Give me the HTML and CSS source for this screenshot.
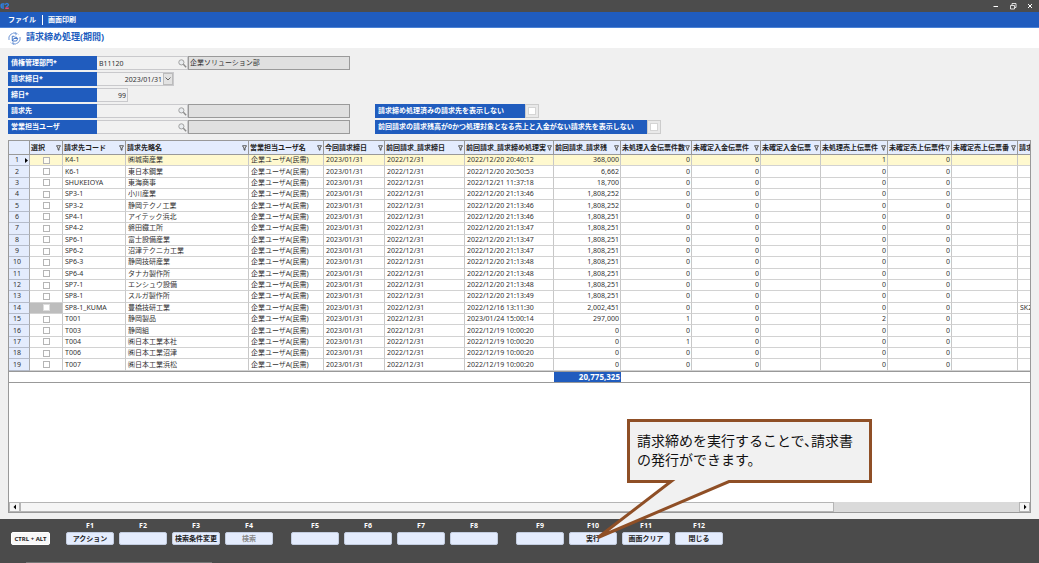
FILE: index.html
```html
<!DOCTYPE html>
<html lang="ja">
<head>
<meta charset="utf-8">
<title>請求締め処理(期間)</title>
<link rel="stylesheet" href="styles.css">
</head>
<body>
<svg class="symbols" aria-hidden="true">
  <symbol id="funnel" viewBox="0 0 10 12"><path d="M1 1.5H9L6 6V10.5L4 9.5V6Z" fill="#fff" stroke="#222" stroke-width="1.5"/></symbol>
  <symbol id="lens" viewBox="0 0 16 16"><circle cx="6" cy="6" r="4.6" fill="#e9ecef" stroke="#999" stroke-width="1.6"/><path d="M9.5 9.5L14.5 14.5" stroke="#8c8c8c" stroke-width="2.6"/></symbol>
</svg>

<header class="titlebar">
  <svg class="logo" viewBox="0 0 20 16" aria-label="E2"><path d="M9 4H5Q2 4 2 8T5 12H8M2 8H8" fill="none" stroke="#2f7fe0" stroke-width="2.600"/><path d="M10 5.500Q13 1.500 16 4T12 10.500" fill="none" stroke="#2f7fe0" stroke-width="2.600"/><path d="M10.500 12.500H17.500" stroke="#e8457f" stroke-width="3"/></svg>
  <div class="window-buttons">
    <button aria-label="最小化"><svg viewBox="0 0 8 8"><path d="M1.500 4.500H6" stroke="#fff"/></svg></button>
    <button aria-label="元に戻す"><svg viewBox="0 0 8 8"><path d="M1.500 3.500H5.500V7H1.500ZM3 3V1.500H7V5.500H6" fill="none" stroke="#fff" stroke-width=".8"/></svg></button>
    <button aria-label="閉じる"><svg viewBox="0 0 8 8"><path d="M2 2L6 6M6 2L2 6" stroke="#fff"/></svg></button>
  </div>
</header>

<nav class="menu"><a href="#">ファイル</a><a href="#">画面印刷</a></nav>

<div class="heading">
  <svg viewBox="0 0 26 26" aria-hidden="true"><g fill="none" stroke="#205cbe" stroke-width="1.300"><path d="M2 16A11 11 0 0 1 17 3M24 10A11 11 0 0 1 9 23"/><path d="M13.500 .8L17.500 3L15 6.500M12.500 25.200L8.500 23L11 19.500"/><path d="M7 4A12 12 0 0 1 22 6M19 22A12 12 0 0 1 4 20" stroke="#b4caec"/></g><path d="M8.500 17.500V8.500H12L13.500 10.500H17.500V12.500" fill="none" stroke="#205cbe" stroke-width="1.600"/><path d="M8.500 18L11.500 13H19.500L17 18Z" fill="#fff" stroke="#205cbe" stroke-width="1.600"/></svg>
  <h1>請求締め処理(期間)</h1>
</div>

<main>
  <form class="filters">
    <div class="fields">
      <div class="row"><label for="dept">債権管理部門*</label><div class="field lookup"><input id="dept" value="B11120"><button type="button" aria-label="債権管理部門の検索"><svg><use href="#lens"/></svg></button></div><input class="readonly" aria-label="債権管理部門名" value="企業ソリューション部" readonly></div>
      <div class="row"><label for="closing">請求締日*</label><div class="field date"><input id="closing" value="2023/01/31"><button type="button" aria-label="日付を選択"><svg viewBox="0 0 8 8"><path d="M1.500 2.500L4 5L6.500 2.500" fill="none" stroke="#666"/></svg></button></div></div>
      <div class="row"><label for="day">締日*</label><div class="field day"><input id="day" value="99"></div></div>
      <div class="row"><label for="client">請求先</label><div class="field lookup"><input id="client"><button type="button" aria-label="請求先の検索"><svg><use href="#lens"/></svg></button></div><input class="readonly" aria-label="請求先名" readonly></div>
      <div class="row"><label for="user">営業担当ユーザ</label><div class="field lookup"><input id="user"><button type="button" aria-label="営業担当ユーザの検索"><svg><use href="#lens"/></svg></button></div><input class="readonly" aria-label="営業担当ユーザ名" readonly></div>
    </div>
    <div class="options">
      <div class="row"><label class="closed" for="hide-closed">請求締め処理済みの請求先を表示しない</label><span class="tick"><input id="hide-closed" type="checkbox"></span></div>
      <div class="row"><label class="empty" for="hide-empty">前回請求の請求残高が0かつ処理対象となる売上と入金がない請求先を表示しない</label><span class="tick"><input id="hide-empty" type="checkbox"></span></div>
    </div>
  </form>

  <section class="grid">
    <div class="viewport">
      <table>
        <colgroup><col class="w-num"><col class="w-pick"><col class="w-code"><col class="w-name"><col class="w-user"><col class="w-now"><col class="w-prev"><col class="w-stamp"><col class="w-rest"><col class="w-in1"><col class="w-in2"><col class="w-in3"><col class="w-out1"><col class="w-out2"><col class="w-out3"><col class="w-last"></colgroup>
        <thead><tr id="head"></tr></thead>
        <tbody id="rows"></tbody>
        <tfoot><tr><td colspan="8"></td><td class="total">20,775,325</td><td colspan="7"></td></tr></tfoot>
      </table>
    </div>
    <div class="scrollbar">
      <button aria-label="左へ"><svg viewBox="0 0 8 8"><path d="M5 1.500V6.500L2.500 4Z"/></svg></button>
      <div class="track"><div class="thumb"></div></div>
      <button aria-label="右へ"><svg viewBox="0 0 8 8"><path d="M3 1.500V6.500L5.500 4Z"/></svg></button>
    </div>
  </section>
</main>

<footer>
  <div class="keys">
    <button class="modifier">CTRL + ALT</button>
    <div class="group">
      <div class="key"><span>F1</span><button>アクション</button></div>
      <div class="key"><span>F2</span><button aria-label="F2"></button></div>
      <div class="key"><span>F3</span><button>検索条件変更</button></div>
      <div class="key"><span>F4</span><button disabled>検索</button></div>
    </div>
    <div class="group">
      <div class="key"><span>F5</span><button aria-label="F5"></button></div>
      <div class="key"><span>F6</span><button aria-label="F6"></button></div>
      <div class="key"><span>F7</span><button aria-label="F7"></button></div>
      <div class="key"><span>F8</span><button aria-label="F8"></button></div>
    </div>
    <div class="group">
      <div class="key"><span>F9</span><button aria-label="F9"></button></div>
      <div class="key"><span>F10</span><button>実行</button></div>
      <div class="key"><span>F11</span><button>画面クリア</button></div>
      <div class="key"><span>F12</span><button>閉じる</button></div>
    </div>
  </div>
  <div class="status"></div>
</footer>

<aside class="callout">
  <svg viewBox="0 0 284 126" aria-hidden="true"><path d="M38.500 5.500H280.500V66.500H139L8 122.500L81 66.500H38.500Z" fill="#f1f1f1" stroke="#8f4f26" stroke-width="3"/></svg>
  <p>請求締めを実行することで、請求書の発行ができます。</p>
</aside>
<script src="grid.js"></script>
</body>
</html>
```
FILE: styles.css
```css
* { box-sizing: border-box; }

body {
  position: relative;
  display: flex;
  flex-direction: column;
  min-height: 100vh;
  margin: 0;
  overflow: hidden;
  background: #f0f0f0;
  color: #333;
  font: 7px/10px "Noto Sans", "Noto Sans CJK JP", sans-serif;
}

button, input {
  margin: 0;
  padding: 0;
  border: 0;
  background: none;
  color: inherit;
  font: inherit;
}

button {
  display: flex;
  align-items: center;
  justify-content: center;
}

.symbols { position: absolute; width: 0; height: 0; }

.titlebar {
  display: flex;
  align-items: center;
  justify-content: space-between;
  height: 12px;
  background: #4c4c4c;
}
.logo { width: 10px; height: 8px; }
.window-buttons { display: flex; gap: 9px; padding-right: 5px; }
.window-buttons svg { display: block; width: 8px; height: 8px; }

.menu {
  display: flex;
  align-items: center;
  height: 16px;
  padding-left: 8px;
  border-bottom: 1px solid #4b82d5;
  background: #205cbe;
}
.menu a {
  color: #fff;
  font-weight: 700;
  text-decoration: none;
}
.menu a + a {
  margin-left: 6px;
  padding-left: 5px;
  border-left: 1px solid #fff;
}

.heading {
  display: flex;
  align-items: center;
  gap: 5px;
  height: 20px;
  padding-left: 8px;
  background: #fff;
}
.heading svg { width: 13px; height: 13px; }
.heading h1 {
  margin: 0;
  color: #205cbe;
  font-size: 9px;
  line-height: 18px;
  align-self: flex-start;
}

main {
  display: flex;
  flex: 1;
  flex-direction: column;
  gap: 6px;
  padding: 8px 8px 6px;
}

.filters { display: flex; gap: 25px; }
.fields, .options { display: flex; flex-direction: column; gap: 2px; }
.options { justify-content: flex-end; }
.row { display: flex; height: 14px; }
.row label {
  width: 89px;
  padding: 0 3px;
  background: #205cbe;
  color: #fff;
  font-weight: 700;
  line-height: 14px;
  white-space: nowrap;
}
.row .closed { width: 150px; }
.row .empty { width: 272px; }

.field {
  display: flex;
  align-items: center;
  border: 1px solid #c9c9cc;
  border-left: 0;
  background: #f1f1f1;
}
.field input {
  flex: 1;
  min-width: 0;
  height: 12px;
  padding: 0 1px 0 2px;
}
.lookup { width: 91px; }
.lookup svg { width: 9px; height: 9px; }
.date { width: 77px; }
.date input, .day input { text-align: right; }
.date button {
  width: 10px;
  height: 12px;
  border: 1px solid #bbb;
  background: #e2e2e2;
}
.date svg { width: 8px; height: 8px; }
.day { width: 31px; }
.readonly {
  width: 162px;
  padding: 0 1px;
  border: 1px solid #9a9a9a;
  background: #e0e0e0;
}
.tick {
  display: flex;
  align-items: center;
  justify-content: center;
  width: 14px;
  border: 1px solid #ccc;
  background: #e9e9e9;
}

input[type="checkbox"] {
  display: block;
  width: 7px;
  height: 7px;
  border: 1px solid #b5b5b5;
  background: #fff;
  appearance: none;
}
.tick input[type="checkbox"] { width: 8px; height: 8px; border-color: #d5d5d5; }

.grid {
  display: flex;
  flex: 1;
  flex-direction: column;
  border: 1px solid #999;
  background: #fff;
}
.viewport { flex: 1; overflow: hidden; }

table {
  width: 1069px;
  border-collapse: separate;
  border-spacing: 0;
  table-layout: fixed;
}
.w-num { width: 21px; }
.w-pick { width: 33px; }
.w-code { width: 63px; }
.w-name { width: 123px; }
.w-user { width: 75px; }
.w-now { width: 61px; }
.w-prev { width: 80px; }
.w-stamp { width: 89px; }
.w-rest { width: 67px; }
.w-in1 { width: 71px; }
.w-in2 { width: 69px; }
.w-in3 { width: 60px; }
.w-out1 { width: 67px; }
.w-out2 { width: 64px; }
.w-out3 { width: 66px; }
.w-last { width: 60px; }

th, td {
  overflow: hidden;
  padding: 0 1px 0 2px;
  border-right: 1px solid #c8c8c8;
  border-bottom: 1px solid #d2d2d2;
  text-align: left;
  white-space: nowrap;
}
thead th {
  height: 14px;
  padding: 0 1px;
  border-color: #999;
  background: #e4ecfd;
  color: #222;
}
.caption { display: flex; align-items: center; justify-content: space-between; }
.caption svg { flex: none; width: 5px; height: 6px; }

tbody { height: 216px; }
tbody th {
  position: relative;
  padding-right: 6px;
  border-right-color: #aaa;
  border-bottom-color: #b5bccb;
  background: #e4ecfd;
  font-weight: 400;
  text-align: center;
}
.current td { background: #fff9cf; }
.marker {
  position: absolute;
  top: 3px;
  right: 1px;
  width: 3px;
  height: 5px;
  fill: #000;
}
td.number { text-align: right; }
td input[type="checkbox"] { margin: 0 auto; }
.current td input[type="checkbox"] { background: #fffdf0; }
.locked .pick { background: #bdbdbd; }
.locked input[type="checkbox"] { border-color: #ddd; }

tfoot td {
  height: 12px;
  padding: 0 1px;
  border-right: 0;
  border-bottom-color: #999;
  border-top: 1px solid #999;
}
tfoot .total {
  background: #205cbe;
  color: #fff;
  font-size: 8px;
  font-weight: 700;
  text-align: right;
}

.scrollbar { display: flex; height: 10px; background: #dadada; }
.scrollbar button {
  width: 11px;
  border: 1px solid #b5b5b5;
  background: #f5f5f5;
}
.scrollbar svg { flex: none; width: 8px; height: 8px; }
.track { flex: 1; }
.thumb {
  width: 81.5%;
  height: 100%;
  border: 1px solid #b5b5b5;
  background: #f5f5f5;
}

footer { background: #4b4b4b; color: #fff; }
.keys {
  display: flex;
  align-items: flex-end;
  gap: 18px;
  padding: 2px 11px 17px;
}
.group { display: flex; gap: 5px; }
.key { display: flex; flex-direction: column; align-items: center; gap: 1px; font-weight: 700; }
.keys button {
  width: 48px;
  height: 13px;
  border: 1px solid #c3cde0;
  border-radius: 2px;
  background: #e4ecfd;
  color: #222;
  font-weight: 700;
  white-space: nowrap;
}
.keys button:disabled { color: #888; }
.keys .modifier {
  width: 39px;
  margin-right: -2px;
  border-color: #fff;
  background: #f8f8f8;
  font-size: 6px;
}
.status {
  width: 186px;
  height: 1px;
  margin-left: 26px;
  background: #777;
}

.callout {
  position: absolute;
  top: 415px;
  left: 590px;
  width: 284px;
}
.callout svg { display: block; width: 284px; height: 126px; }
.callout p {
  position: absolute;
  top: 16px;
  left: 47px;
  width: 220px;
  margin: 0;
  color: #111;
  font: 14px/19px "Noto Sans CJK JP", sans-serif;
  font-feature-settings: "halt";
}
```
FILE: grid.js
```js
const columns = ["選択", "請求先コード", "請求先略名", "営業担当ユーザ名", "今回請求締日",
  "前回請求_請求締日", "前回請求_請求締め処理実", "前回請求_請求残", "未処理入金伝票件数",
  "未確定入金伝票件", "未確定入金伝票", "未処理売上伝票件", "未確定売上伝票件", "未確定売上伝票番", "請求先"];

// code, name, last closing run, balance, unprocessed receipts, unprocessed sales
const records = [
  ["K4-1", "㈱城南産業", "2022/12/20 20:40:12", "368,000", 0, 1],
  ["K6-1", "東日本鋼業", "2022/12/20 20:50:53", "6,662", 0, 0],
  ["SHUKEIOYA", "東海商事", "2022/12/21 11:37:18", "18,700", 0, 0],
  ["SP3-1", "小川産業", "2022/12/20 21:13:46", "1,808,252", 0, 0],
  ["SP3-2", "静岡テクノ工業", "2022/12/20 21:13:46", "1,808,252", 0, 0],
  ["SP4-1", "アイテック浜北", "2022/12/20 21:13:46", "1,808,251", 0, 0],
  ["SP4-2", "磐田鐵工所", "2022/12/20 21:13:47", "1,808,251", 0, 0],
  ["SP6-1", "富士設備産業", "2022/12/20 21:13:47", "1,808,251", 0, 0],
  ["SP6-2", "沼津テクニカ工業", "2022/12/20 21:13:47", "1,808,251", 0, 0],
  ["SP6-3", "静岡技研産業", "2022/12/20 21:13:48", "1,808,251", 0, 0],
  ["SP6-4", "タナカ製作所", "2022/12/20 21:13:48", "1,808,251", 0, 0],
  ["SP7-1", "エンシュウ設備", "2022/12/20 21:13:48", "1,808,251", 0, 0],
  ["SP8-1", "スルガ製作所", "2022/12/20 21:13:49", "1,808,251", 0, 0],
  ["SP8-1_KUMA", "豊橋技研工業", "2022/12/16 13:11:30", "2,002,451", 0, 0, "SK2"],
  ["T001", "静岡製品", "2023/01/24 15:00:14", "297,000", 1, 2],
  ["T003", "静岡組", "2022/12/19 10:00:20", "0", 0, 0],
  ["T004", "㈱日本工業本社", "2022/12/19 10:00:20", "0", 1, 0],
  ["T006", "㈱日本工業沼津", "2022/12/19 10:00:20", "0", 0, 0],
  ["T007", "㈱日本工業浜松", "2022/12/19 10:00:20", "0", 0, 0]
];

document.getElementById("head").innerHTML = "<th></th>" + columns.map(name =>
  `<th scope="col"><div class="caption">${name}<svg><use href="#funnel"/></svg></div></th>`).join("");

document.getElementById("rows").innerHTML = records.map((record, i) => {
  const [code, name, stamp, rest, receipts, sales, parent = ""] = record;
  const text = value => `<td>${value}</td>`;
  const number = value => `<td class="number">${value}</td>`;
  const state = i === 0 ? "current" : parent ? "locked" : "";
  const marker = i === 0 ? '<svg class="marker" viewBox="0 0 3 5"><path d="M0 0L3 2.500L0 5Z"/></svg>' : "";
  return `<tr class="${state}"><th scope="row">${i + 1}${marker}</th>` +
    `<td class="pick"><input type="checkbox" aria-label="${code}を選択"></td>` +
    text(code) + text(name) + text("企業ユーザA(民需)") + text("2023/01/31") + text("2022/12/31") +
    text(stamp) + number(rest) + number(receipts) + number(0) + text("") + number(sales) +
    number(0) + text("") + text(parent) + "</tr>";
}).join("");
```
